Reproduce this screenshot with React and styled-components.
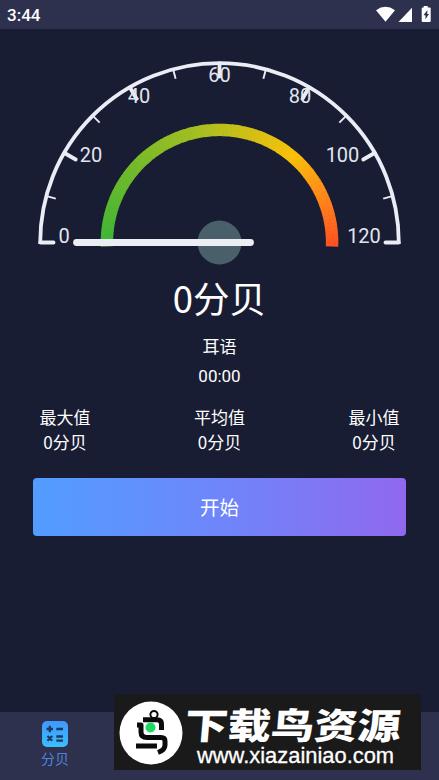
import React from 'react';
import styled, { createGlobalStyle } from 'styled-components';

const GlobalStyle = createGlobalStyle`
  body { margin: 0; background: #191d33; }
  * { box-sizing: border-box; }
`;

const Screen = styled.div`
  position: relative;
  width: 439px;
  height: 780px;
  overflow: hidden;
  display: flex;
  flex-direction: column;
  background: #191d33;
  color: #fff;
  font-family: Roboto, "Noto Sans CJK SC", sans-serif;
`;

const StatusBar = styled.header`
  height: 29px;
  flex: none;
  display: flex;
  align-items: center;
  justify-content: space-between;
  padding: 1px 7px 0 7px;
  background: #2d314e;
  font-size: 17px;
  font-weight: 500;
`;

const StatusIcons = styled.svg`
  display: block;
  width: 56px;
  height: 18px;
`;

const Main = styled.main`
  flex: 1;
  display: flex;
  flex-direction: column;
  align-items: center;
`;

const GaugeSvg = styled.svg`
  display: block;
  width: 439px;
  height: 241px;
  flex: none;
`;

const GaugeLabel = styled.text`
  fill: #e2e5ee;
  font-family: Roboto, sans-serif;
  font-size: 20px;
  font-weight: 400;
  text-anchor: middle;
`;

const Reading = styled.div`
  height: 58px;
  line-height: 55px;
  font-family: "Noto Sans CJK SC", sans-serif;
  font-size: 36.5px;
`;

const Info = styled.div`
  height: 30px;
  line-height: 30px;
  font-size: 17px;
  margin-top: ${(p) => p.$gap || 0}px;
`;

const Stats = styled.div`
  width: 100%;
  display: flex;
  justify-content: space-between;
  padding: 0 39px;
  margin-top: 13px;
`;

const Stat = styled.div`
  width: 52px;
  display: flex;
  flex-direction: column;
  align-items: center;
  font-family: "Noto Sans CJK SC", sans-serif;
  font-size: 17px;
  line-height: 25px;
  white-space: nowrap;
`;

const StartButton = styled.button`
  width: 373px;
  height: 58px;
  margin-top: 24px;
  padding: 0 0 2px;
  border: 0;
  border-radius: 4px;
  background: linear-gradient(90deg, #529dff, #6e86fa 50%, #9068ee);
  color: #fff;
  font-family: "Noto Sans CJK SC", sans-serif;
  font-size: 19.5px;
`;

const TabBar = styled.nav`
  height: 68px;
  flex: none;
  display: flex;
  background: #2d314e;
`;

const Tab = styled.div`
  width: 110px;
  padding-top: 9px;
  display: flex;
  flex-direction: column;
  align-items: center;
  color: #5086dc;
  font-size: 14px;
  line-height: 22px;
`;

const TabIcon = styled.svg`
  width: 26px;
  height: 26px;
  margin-bottom: 1px;
`;

const Watermark = styled.aside`
  position: absolute;
  left: 114px;
  top: 694px;
  width: 307px;
  height: 76px;
  display: flex;
  background: #1a1a1a;
`;

const BirdLogo = styled.svg`
  width: 64px;
  height: 64px;
  margin: 7px 0 0 5px;
  flex: none;
`;

const BrandText = styled.div`
  padding-left: 2px;
  white-space: nowrap;
`;

const BrandName = styled.div`
  height: 46px;
  line-height: 46px;
  margin-top: 6px;
  font-family: "Noto Sans CJK SC", sans-serif;
  font-size: 36px;
  font-weight: 900;
  transform: scaleX(1.2) skewX(-4deg);
  transform-origin: 0 50%;
`;

const BrandUrl = styled.div`
  height: 24px;
  line-height: 24px;
  margin: -2px 0 0 12px;
  font-family: "Liberation Sans", sans-serif;
  font-size: 21.9px;
  -webkit-text-stroke: 0.3px #fff;
`;

const CX = 219.5;
const CY = 213.5;
const polar = (r, deg) => {
  const a = (deg * Math.PI) / 180;
  return [CX - r * Math.cos(a), CY - r * Math.sin(a)];
};

const LABELS = [
  [0, 64, 213.5],
  [20, 91, 133.3],
  [40, 139, 74.4],
  [60, 219.5, 52.8],
  [80, 300, 74.4],
  [100, 342.5, 133.3],
  [120, 364, 213.5],
];

const STOPS = [
  [0, [61, 181, 54]],
  [0.45, [168, 191, 32]],
  [0.72, [250, 193, 10]],
  [0.84, [255, 145, 25]],
  [1, [255, 82, 34]],
];

const colorAt = (t) => {
  const i = Math.max(1, STOPS.findIndex(([p]) => p >= t));
  const [p0, c0] = STOPS[i - 1];
  const [p1, c1] = STOPS[i];
  const k = (t - p0) / (p1 - p0);
  return `rgb(${c0.map((v, j) => Math.round(v + (c1[j] - v) * k)).join(',')})`;
};

const SEGMENTS = 92;

function Gauge() {
  return (
    <GaugeSvg viewBox="0 0 439 241">
      <path d="M40.2 215V213.5A179.3 179.3 0 0 1 398.8 213.5V215" fill="none" stroke="#eaedf5" strokeWidth="3.8" />
      {Array.from({ length: 13 }, (_, i) => {
        const major = i % 2 === 0;
        const [x1, y1] = polar(179, i * 15);
        const [x2, y2] = polar(major ? 166 : 169.5, i * 15);
        return (
          <line key={i} x1={x1} y1={y1} x2={x2} y2={y2} stroke="#eaedf5" strokeWidth={major ? 3.8 : 1.9} strokeLinecap={major ? 'round' : 'butt'} />
        );
      })}
      {Array.from({ length: SEGMENTS }, (_, i) => {
        const a = -2 + (i * 184) / SEGMENTS;
        const [x1, y1] = polar(112.6, a);
        const [x2, y2] = polar(112.6, Math.min(182, a + 2.3));
        return (
          <path key={i} d={`M${x1} ${y1}A112.6 112.6 0 0 1 ${x2} ${y2}`} fill="none" stroke={colorAt(i / (SEGMENTS - 1))} strokeWidth="12.4" />
        );
      })}
      {LABELS.map(([n, x, y]) => (
        <GaugeLabel key={n} x={x} y={y}>{n}</GaugeLabel>
      ))}
      <circle cx="219.5" cy="213.5" r="22" fill="#495f6a" />
      <line x1="76.5" y1="213.5" x2="250.5" y2="213.5" stroke="#ebeef2" strokeWidth="6.8" strokeLinecap="round" />
    </GaugeSvg>
  );
}

export default function App() {
  return (
    <Screen>
      <GlobalStyle />
      <StatusBar>
        <span>3:44</span>
        <StatusIcons viewBox="0 0 56 18" fill="#fff">
          <path d="M0 4.2Q9.5 -2.7 19 4.2L9.5 15.7Z" />
          <path d="M36 1.8V16H22.5Z" />
          <path fillRule="evenodd" d="M47.7 0h4v1.5h2q1 0 1 1v12.5q0 1-1 1h-7q-1 0-1-1V2.5q0-1 1-1h1ZM51.4 3.9L47.5 9.3h2v4L53 8h-1.8Z" />
        </StatusIcons>
      </StatusBar>
      <Main>
        <Gauge />
        <Reading>0分贝</Reading>
        <Info $gap={4}>耳语</Info>
        <Info $gap={-1}>00:00</Info>
        <Stats>
          {['最大值', '平均值', '最小值'].map((name) => (
            <Stat key={name}>
              <span>{name}</span>
              <span>0分贝</span>
            </Stat>
          ))}
        </Stats>
        <StartButton>开始</StartButton>
      </Main>
      <TabBar>
        <Tab>
          <TabIcon viewBox="0 0 26 26">
            <defs>
              <linearGradient id="tabFill" x1="0" y1="0" x2="0" y2="1">
                <stop offset="0" stopColor="#3f98ff" />
                <stop offset="1" stopColor="#39bffd" />
              </linearGradient>
            </defs>
            <rect width="26" height="26" rx="5" fill="url(#tabFill)" />
            <path d="M4.5 8H11M7.8 4.8V11.2M14.3 8H21M5.5 15L10.2 19.7M10.2 15L5.5 19.7M14.3 15.5H21M14.3 19.6H21" stroke="#20375e" strokeWidth="2.3" fill="none" />
          </TabIcon>
          <span>分贝</span>
        </Tab>
      </TabBar>
      <Watermark>
        <BirdLogo viewBox="0 0 64 64">
          <circle cx="32" cy="32" r="31.5" fill="#fff" />
          <g fill="none" stroke="#0b0b0b" strokeLinejoin="round">
            <circle cx="35" cy="13.5" r="3.6" strokeWidth="2" />
            <path d="M24 18.8H38Q42.5 18.8 42.5 23V29" strokeWidth="5" />
            <path d="M18 24H22V31Q22 36.5 28 36.5H42Q46 36.5 46 40V44Q46 49 39 51.5" strokeWidth="5" />
            <path d="M17 45H38" strokeWidth="5" />
          </g>
          <circle cx="31.5" cy="26.5" r="5" fill="#1ddb62" />
        </BirdLogo>
        <BrandText>
          <BrandName>下载鸟资源</BrandName>
          <BrandUrl>www.xiazainiao.com</BrandUrl>
        </BrandText>
      </Watermark>
    </Screen>
  );
}
